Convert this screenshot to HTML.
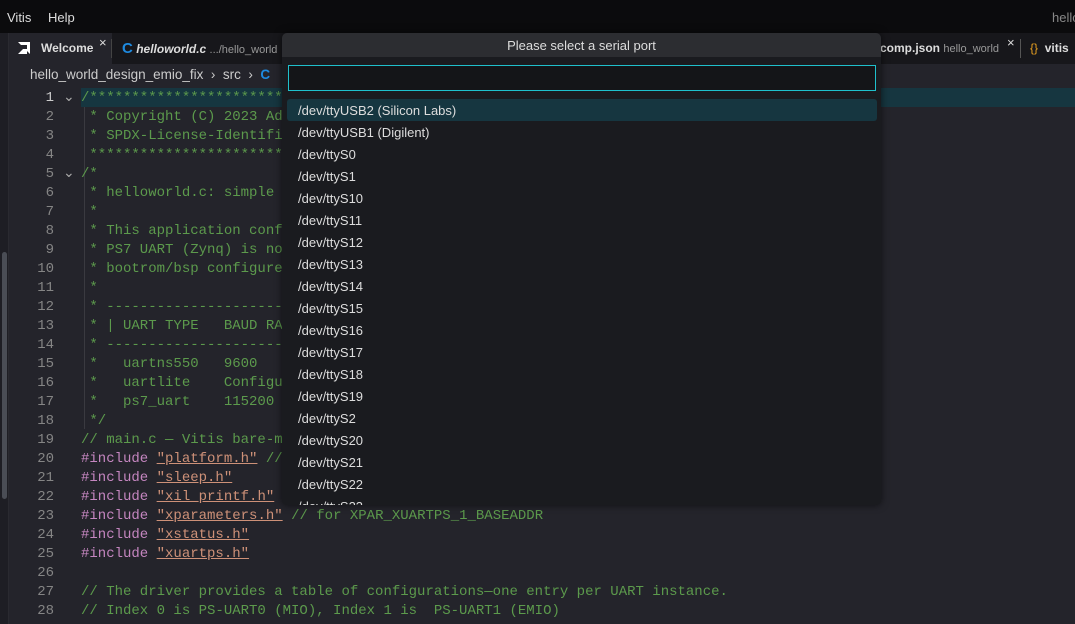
<!DOCTYPE html>
<html><head><style>
*{margin:0;padding:0;box-sizing:border-box}
body{width:1075px;height:624px;overflow:hidden;background:#24242b;font-family:"Liberation Sans",sans-serif;position:relative}
.title{position:absolute;left:0;top:0;width:1075px;height:33px;background:#0b0b0d;color:#ddd;font-size:13px}
.title span{position:absolute;top:10px}
.side{position:absolute;left:0;top:33px;width:9px;height:591px;background:#1e1e24;border-right:1px solid #2a2a30}
.sb{position:absolute;left:2px;top:219px;width:5px;height:247px;background:#4a4d55;border-radius:3px}
.tabs{position:absolute;left:10px;top:33px;width:1065px;height:31px;background:#17171b;font-size:12px;color:#ddd}
.tab{position:absolute;top:0;height:31px;line-height:31px}
.bc{position:absolute;left:30px;top:67px;font-size:13.5px;color:#ccc}
.code{position:absolute;left:0;top:88.5px;font-family:"Liberation Mono",monospace;font-size:14px}
.l{height:19px;line-height:19px;white-space:pre;position:relative}
.n{display:inline-block;width:54px;text-align:right;color:#858585}
.t{position:absolute;left:81px;top:0}
.c{color:#5c9a4c}.p{color:#c586c0}.s{color:#ce9178;text-decoration:underline;text-decoration-color:#ce9178}
.hl{position:absolute;left:81px;top:88px;width:994px;height:19px;background:#163640}
.guide{position:absolute;left:84px;top:107px;width:1px;height:322px;background:#3a3a40}
.dd{position:absolute;left:282px;top:33px;width:599px;height:472px;background:#1a1b1f;border-radius:5px;box-shadow:0 0 8px rgba(0,0,0,.6);overflow:hidden;color:#ddd;font-size:13px}
.dd .h{height:24px;background:#2c2d31;text-align:center;line-height:25px}
.inp{position:absolute;left:6px;top:32px;width:588px;height:26px;border:1px solid #1fc0cc;background:#141518}
.items{position:absolute;left:5px;top:66px;width:590px}
.it{height:22px;line-height:24px;padding-left:11px;border-radius:3px}
.it.a{background:#163640}
</style></head><body>
<div class="title"><span style="left:7px">Vitis</span><span style="left:48px">Help</span><span style="left:1052px;color:#888">hello</span></div>
<div class="side"><div class="sb"></div></div>
<div class="tabs">
<div class="tab" style="left:0;width:102px;background:#24242b"><svg style="position:absolute;left:8px;top:9px" width="12" height="12" viewBox="0 0 12 12"><path d="M0 0H12V12L9 9V3H3Z M0 12L5 7H9V12Z" fill="#fff"/></svg><b style="position:absolute;left:31px">Welcome</b><span style="position:absolute;left:89px;top:-6px;font-size:13px">×</span></div>
<div style="position:absolute;left:101px;top:6px;width:1px;height:19px;background:#444"></div>
<div class="tab" style="left:112px"><b style="color:#1e8ae0;font-size:15px">C</b> <b><i>helloworld.c</i></b> <span style="color:#999;font-size:11px">.../hello_world</span></div>
<div class="tab" style="left:870px"><b>comp.json</b> <span style="color:#999;font-size:11px">hello_world</span><span style="position:absolute;left:127px;top:-6px;font-size:13px">×</span></div>
<div style="position:absolute;left:1010px;top:6px;width:1px;height:19px;background:#555"></div>
<div class="tab" style="left:1020px"><span style="color:#e8a020">{}</span> &nbsp;<b>vitis</b></div>
</div>
<div class="bc">hello_world_design_emio_fix &nbsp;›&nbsp; src &nbsp;›&nbsp; <b style="color:#1e8ae0">C</b></div>
<div class="hl"></div>
<div class="guide"></div>
<div class="code">
<div class="l"><span class="n" style="color:#ccc">1</span><span style="color:#aaa;position:absolute;left:63px">⌄</span><span class="t c">/**********************************************************************************</span></div>
<div class="l"><span class="n">2</span><span class="t c"> * Copyright (C) 2023 Advanced Micro Devices</span></div>
<div class="l"><span class="n">3</span><span class="t c"> * SPDX-License-Identifier: MIT</span></div>
<div class="l"><span class="n">4</span><span class="t c"> ******************************************</span></div>
<div class="l"><span class="n">5</span><span style="color:#aaa;position:absolute;left:63px">⌄</span><span class="t c">/*</span></div>
<div class="l"><span class="n">6</span><span class="t c"> * helloworld.c: simple test application</span></div>
<div class="l"><span class="n">7</span><span class="t c"> *</span></div>
<div class="l"><span class="n">8</span><span class="t c"> * This application configures UART</span></div>
<div class="l"><span class="n">9</span><span class="t c"> * PS7 UART (Zynq) is not initialized</span></div>
<div class="l"><span class="n">10</span><span class="t c"> * bootrom/bsp configures it</span></div>
<div class="l"><span class="n">11</span><span class="t c"> *</span></div>
<div class="l"><span class="n">12</span><span class="t c"> * ------------------------------------</span></div>
<div class="l"><span class="n">13</span><span class="t c"> * | UART TYPE   BAUD RATE</span></div>
<div class="l"><span class="n">14</span><span class="t c"> * ------------------------------------</span></div>
<div class="l"><span class="n">15</span><span class="t c"> *   uartns550   9600</span></div>
<div class="l"><span class="n">16</span><span class="t c"> *   uartlite    Configurable</span></div>
<div class="l"><span class="n">17</span><span class="t c"> *   ps7_uart    115200</span></div>
<div class="l"><span class="n">18</span><span class="t c"> */</span></div>
<div class="l"><span class="n">19</span><span class="t c">// main.c — Vitis bare-metal</span></div>
<div class="l"><span class="n">20</span><span class="t"><span class="p">#include</span> <span class="s">"platform.h"</span> <span class="c">//</span></span></div>
<div class="l"><span class="n">21</span><span class="t"><span class="p">#include</span> <span class="s">"sleep.h"</span></span></div>
<div class="l"><span class="n">22</span><span class="t"><span class="p">#include</span> <span class="s">"xil_printf.h"</span></span></div>
<div class="l"><span class="n">23</span><span class="t"><span class="p">#include</span> <span class="s">"xparameters.h"</span> <span class="c">// for XPAR_XUARTPS_1_BASEADDR</span></span></div>
<div class="l"><span class="n">24</span><span class="t"><span class="p">#include</span> <span class="s">"xstatus.h"</span></span></div>
<div class="l"><span class="n">25</span><span class="t"><span class="p">#include</span> <span class="s">"xuartps.h"</span></span></div>
<div class="l"><span class="n">26</span></div>
<div class="l"><span class="n">27</span><span class="t c">// The driver provides a table of configurations—one entry per UART instance.</span></div>
<div class="l"><span class="n">28</span><span class="t c">// Index 0 is PS-UART0 (MIO), Index 1 is  PS-UART1 (EMIO)</span></div>
</div>
<div class="dd">
<div class="h">Please select a serial port</div>
<div class="inp"></div>
<div class="items">
<div class="it a">/dev/ttyUSB2 (Silicon Labs)</div>
<div class="it">/dev/ttyUSB1 (Digilent)</div>
<div class="it">/dev/ttyS0</div><div class="it">/dev/ttyS1</div><div class="it">/dev/ttyS10</div><div class="it">/dev/ttyS11</div><div class="it">/dev/ttyS12</div><div class="it">/dev/ttyS13</div><div class="it">/dev/ttyS14</div><div class="it">/dev/ttyS15</div><div class="it">/dev/ttyS16</div><div class="it">/dev/ttyS17</div><div class="it">/dev/ttyS18</div><div class="it">/dev/ttyS19</div><div class="it">/dev/ttyS2</div><div class="it">/dev/ttyS20</div><div class="it">/dev/ttyS21</div><div class="it">/dev/ttyS22</div><div class="it">/dev/ttyS23</div>
</div>
</div>
</body></html>
